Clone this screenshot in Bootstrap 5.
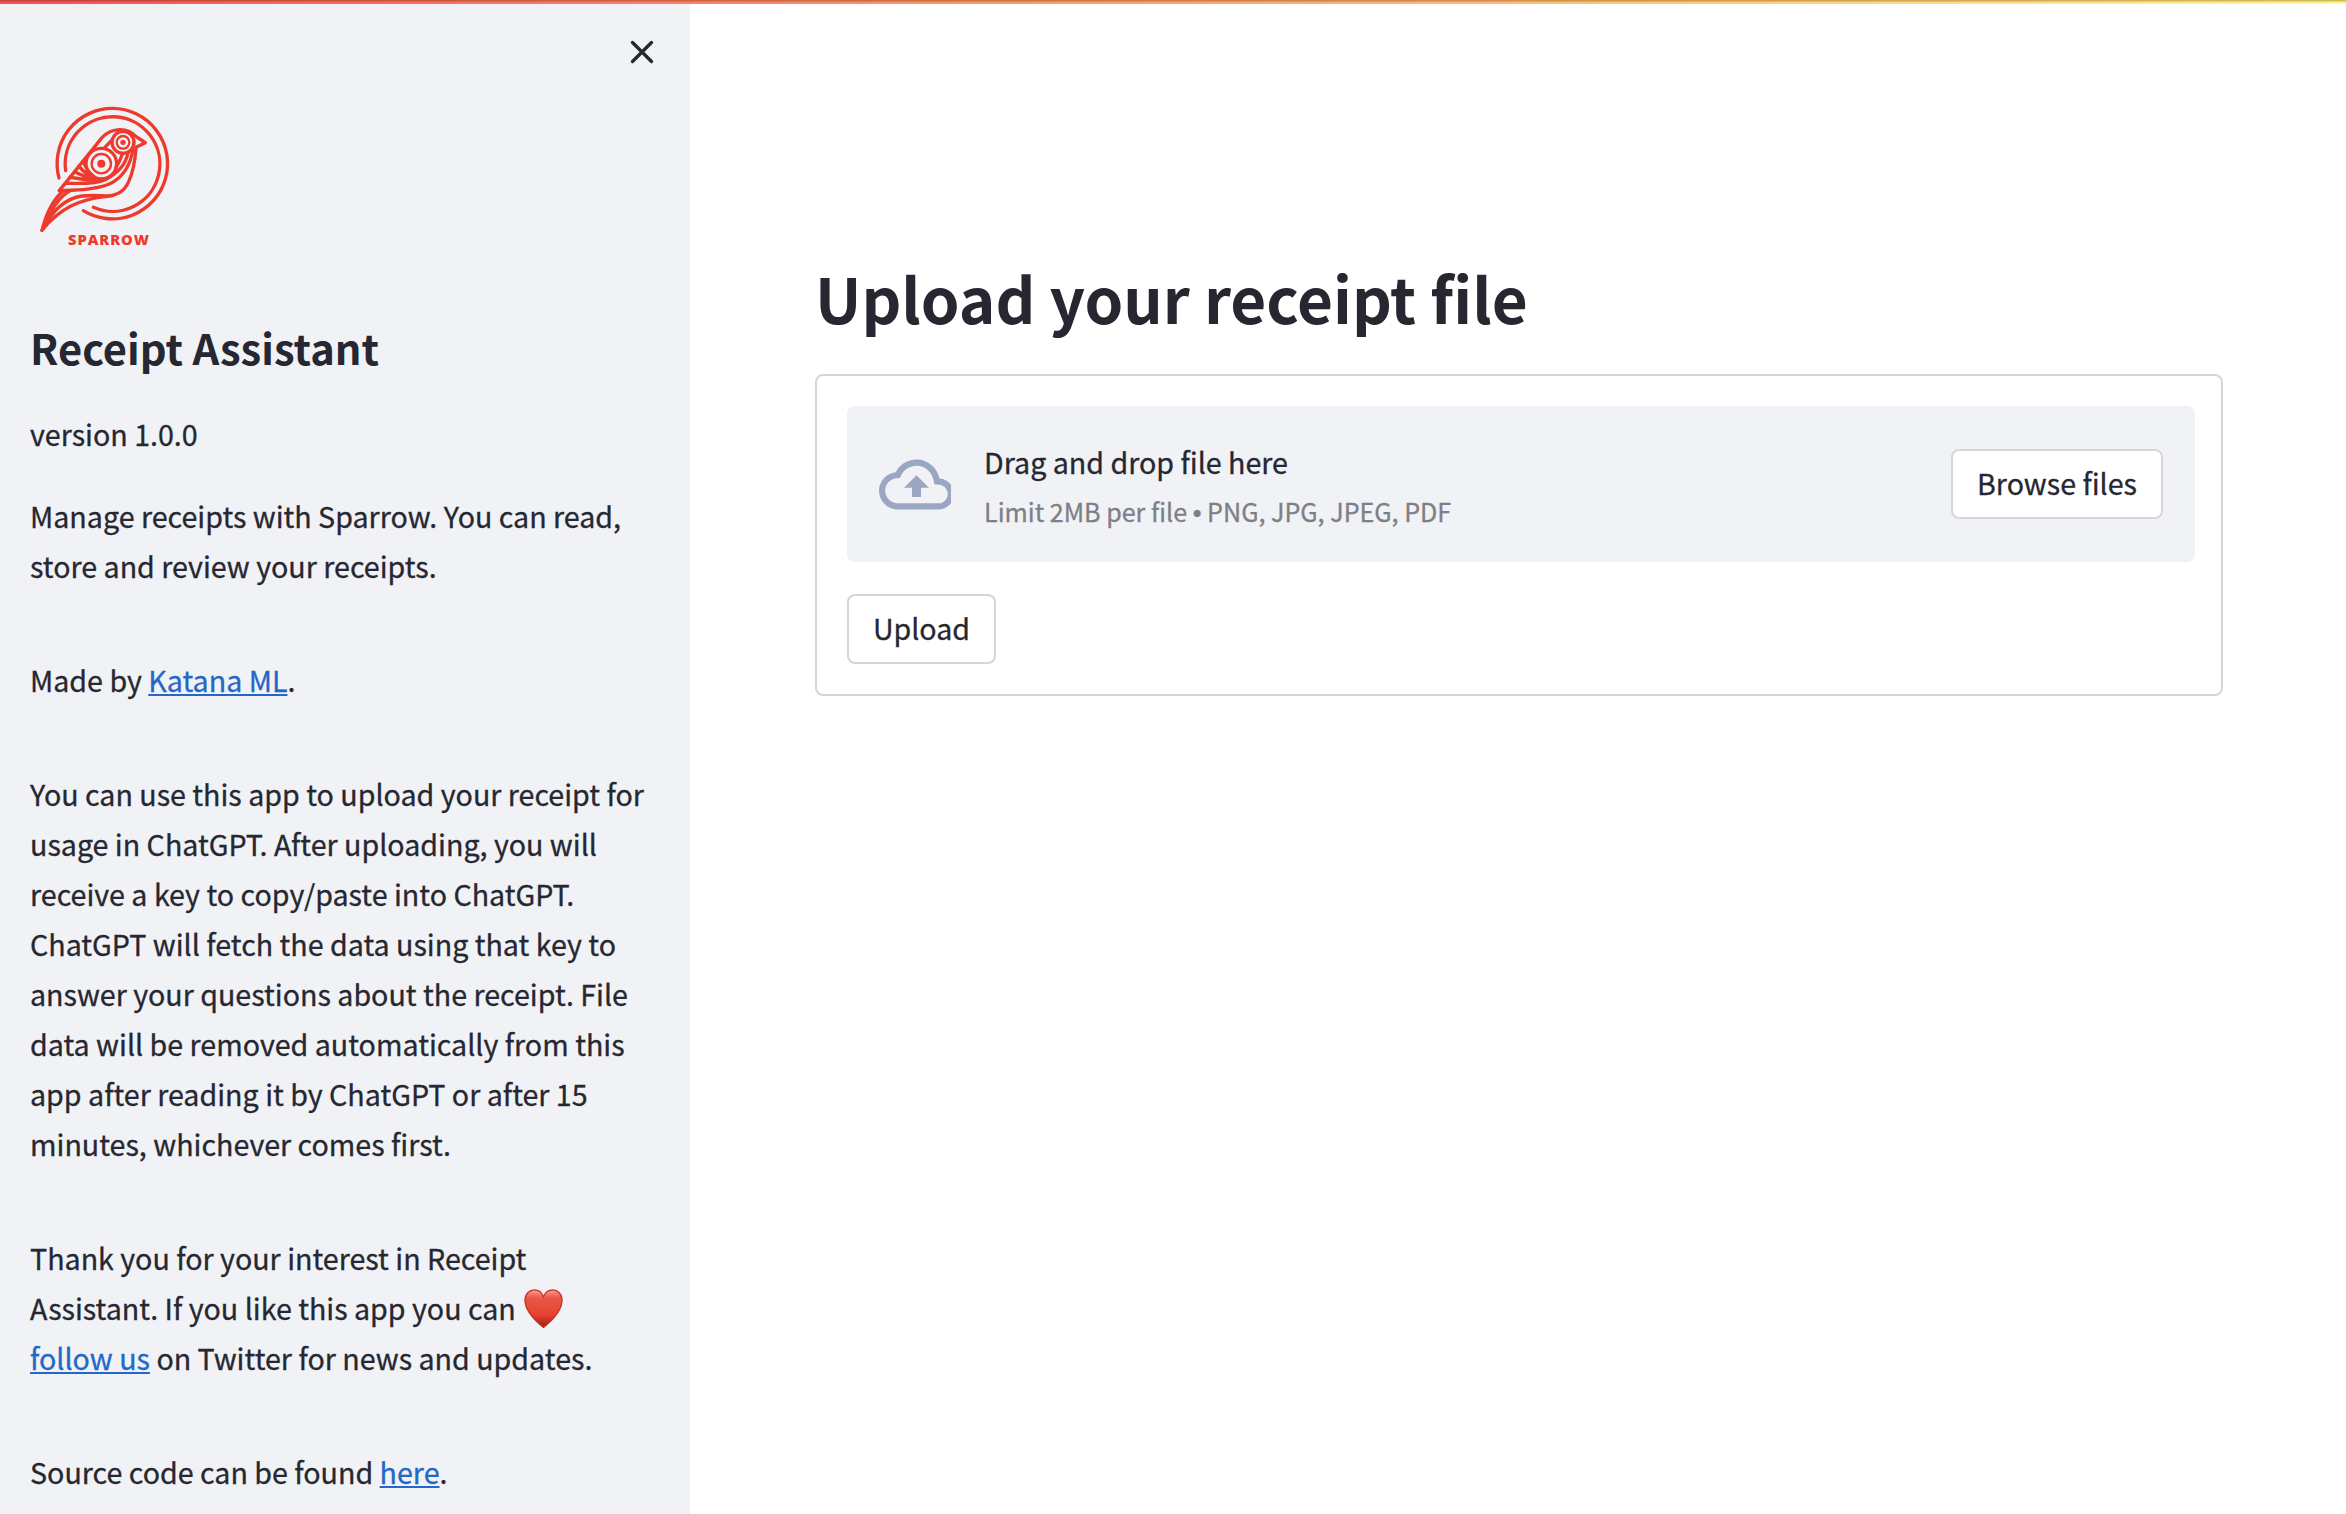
<!DOCTYPE html>
<html lang="en">
<head>
<meta charset="utf-8">
<title>Receipt Assistant</title>
<link href="https://cdn.jsdelivr.net/npm/bootstrap@5.3.0/dist/css/bootstrap.min.css" rel="stylesheet">
<style>
body{font-family:"Noto Sans CJK SC","Noto Sans",sans-serif;font-size:28.64px;line-height:50px;color:#262730;height:1514px;overflow:hidden;-webkit-text-stroke:.3px}
.topline{height:4px;background:linear-gradient(to bottom,rgba(80,0,0,.25) 1px,rgba(80,0,0,.14) 1px,rgba(80,0,0,.14) 2px,transparent 2px),linear-gradient(90deg,#f25552,#f9a76b 50%,#fffa88)}
.side{width:690px;background:#f0f2f6;padding:0 30px}
.side-close{height:86px;padding:34px 4px 0 0}
.brand{margin-left:-10px}
.side h2{font-size:41.7px;line-height:60px;font-weight:600;margin:57px 0 32px;-webkit-text-stroke:0}
.side p{margin:0 0 64px;white-space:nowrap}
.side p.tight{margin-bottom:32px}
.side a{color:#2567c7;text-decoration-thickness:2px;text-underline-offset:2px}
.heart{width:39px;height:39px;margin-left:2px;vertical-align:-8px}
.page{padding:241px 123px 0 125px}
.page h1{font-size:62px;line-height:104px;font-weight:600;margin:0 0 25px;-webkit-text-stroke:0}
.upl-form{border:2px solid #d5d6d8;border-radius:8px;height:322px;padding:30px 26px 30px 30px}
.drop{background:#f0f2f6;border-radius:8px;height:156px;padding:0 32px 0 32px}
.drop svg{margin-top:1px}
.drop-text{margin-left:33px;padding-top:5px}
.drop-hint{font-size:25.1px;line-height:48px;color:#7e7f85}
.dot{font-family:"Liberation Sans",sans-serif}
.btn-plain{font-size:28.6px;line-height:50px;color:#262730;background:#fff;border:2px solid #d5d6d8;border-radius:8px;height:70px;padding:6.5px 0 9.5px}
.w-browse{width:212px}.w-upload{width:149px;margin-top:32px}
</style>
</head>
<body class="d-flex flex-column m-0">
<div class="topline flex-shrink-0"></div>
<div class="d-flex flex-grow-1">
<aside class="side flex-shrink-0">
  <div class="side-close d-flex justify-content-end"><svg width="28" height="28" viewBox="0 0 28 28" fill="none" stroke="#262730" stroke-width="3.3" stroke-linecap="round"><path d="M4.500 4.500 23.500 23.500M23.500 4.500 4.500 23.500"/></svg></div>
  <svg class="brand d-block" width="170" height="170" viewBox="0 0 510 510" fill="none" stroke="#ee3a2d" stroke-width="10" stroke-linecap="round" stroke-linejoin="round">
    <path d="M117 264A165.700 165.700 0 1 1 190 362"/><path d="M137 242A142 142 0 1 1 220 352"/>
    <path d="M118 302 246 143C275 112 322 110 350 141L376 158 348 172C346 205 342 240 326 275C312 308 288 315 262 319C180 326 118 356 66 421C78 372 97 330 130 302Z"/>
    <path d="M118 302C170 300 222 300 268 282C308 264 332 225 338 180"/>
    <path d="M136 280C180 280 225 282 256 269C292 250 318 222 324 188"/>
    <path d="M150 262C180 266 215 274 244 268M164 245C185 256 210 265 232 268M177 229C190 245 208 258 228 266M190 213C196 232 206 248 222 260"/>
    <path d="M66 421C96 362 132 326 186 318C220 314 250 319 278 317M66 421C86 372 112 322 150 302"/>
    <circle cx="309" cy="157" r="33"/><circle cx="309" cy="157" r="19" stroke-width="7"/><circle cx="309" cy="157" r="8" fill="#ee3a2d" stroke="none"/>
    <circle cx="244" cy="221" r="46"/><circle cx="244" cy="221" r="29" stroke-width="7"/><circle cx="244" cy="221" r="12" fill="#ee3a2d" stroke="none"/>
    <path d="M252 175 274 152M288 232C300 215 304 200 308 190"/>
    <text x="144" y="465" textLength="243" font-family="Open Sans, sans-serif" font-weight="800" font-size="44" fill="#ee3a2d" stroke="none">SPARROW</text>
  </svg>
  <h2>Receipt Assistant</h2>
  <p class="tight">version 1.0.0</p>
  <p>Manage receipts with Sparrow. You can read,<br>store and review your receipts.</p>
  <p>Made by <a href="#">Katana ML</a>.</p>
  <p>You can use this app to upload your receipt for<br>usage in ChatGPT. After uploading, you will<br>receive a key to copy/paste into ChatGPT.<br>ChatGPT will fetch the data using that key to<br>answer your questions about the receipt. File<br>data will be removed automatically from this<br>app after reading it by ChatGPT or after 15<br>minutes, whichever comes first.</p>
  <p>Thank you for your interest in Receipt<br>Assistant. If you like this app you can <svg class="heart" viewBox="0 0 40 40"><defs><linearGradient id="hg" x1="0" y1="0" x2="0" y2="1"><stop offset="0" stop-color="#f4a092"/><stop offset=".22" stop-color="#ea5647"/><stop offset=".65" stop-color="#e64332"/><stop offset="1" stop-color="#a81b10"/></linearGradient></defs><path d="M20 39.500C12 33 1 23 1 11.500 1 5 5.500 1 10.500 1 15 1 18.500 4 20 8 21.500 4 25 1 29.500 1 34.500 1 39 5 39 11.500 39 23 28 33 20 39.500Z" fill="url(#hg)" stroke="#c9301f" stroke-width="1.300"/></svg><br><a href="#">follow us</a> on Twitter for news and updates.</p>
  <p class="mb-0">Source code can be found <a href="#">here</a>.</p>
</aside>
<main class="page flex-grow-1">
  <h1>Upload your receipt file</h1>
  <form class="upl-form">
    <div class="drop d-flex align-items-center">
      <svg class="flex-shrink-0" width="72" height="75" viewBox="0 0 23.040 24" fill="#9ba6c3"><path d="M19.350 10.040C18.670 6.590 15.640 4 12 4 9.110 4 6.600 5.640 5.350 8.040 2.340 8.360 0 10.910 0 14c0 3.310 2.690 6 6 6h13c2.760 0 5-2.240 5-5 0-2.640-2.050-4.780-4.650-4.960zM19 18H6c-2.210 0-4-1.790-4-4 0-2.050 1.530-3.760 3.560-3.970l1.070-.11.5-.95C8.080 7.140 9.940 6 12 6c2.620 0 4.880 1.860 5.390 4.430l.3 1.500 1.530.11c1.560.1 2.780 1.410 2.780 2.960 0 1.650-1.350 3-3 3zM8 13h2.550v3h2.900v-3H16l-4-4z"/></svg>
      <div class="drop-text flex-grow-1"><div>Drag and drop file here</div><div class="drop-hint">Limit 2MB per file <span class="dot">•</span> PNG, JPG, JPEG, PDF</div></div>
      <button type="button" class="btn btn-plain w-browse">Browse files</button>
    </div>
    <button type="button" class="btn btn-plain w-upload">Upload</button>
  </form>
</main>
</div>
<script src="https://cdn.jsdelivr.net/npm/bootstrap@5.3.0/dist/js/bootstrap.bundle.min.js"></script>
</body>
</html>
